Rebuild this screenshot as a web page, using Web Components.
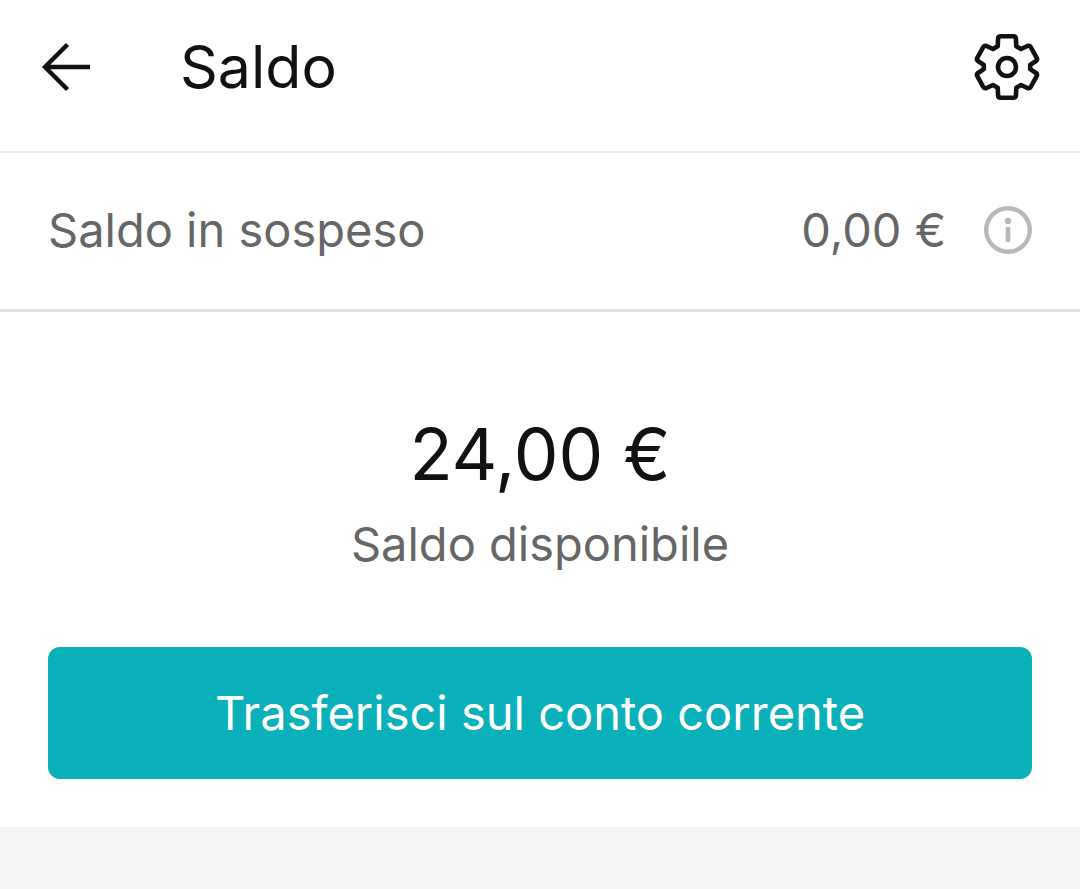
<!DOCTYPE html>
<html lang="it">
<head>
<meta charset="utf-8">
<meta name="viewport" content="width=device-width, initial-scale=1">
<title>Saldo</title>
<style>
  body {
    margin: 0;
    background: #f4f5f7;
    color: #111;
    font-family: Inter, "Liberation Sans", sans-serif;
    --muted: #666;
    --line: #e2e2e2;
    --accent: #0ab1bb;
  }
</style>
</head>
<body>
<balance-page>
  <app-header slot="header">Saldo</app-header>
  <pending-row label="Saldo in sospeso">0,00 €</pending-row>
  <balance-summary amount="24,00 €" label="Saldo disponibile">
    <primary-button>Trasferisci sul conto corrente</primary-button>
  </balance-summary>
</balance-page>

<script>
/** <balance-page> - white sheet holding the header and the balance sections */
class BalancePage extends HTMLElement {
  constructor() {
    super();
    this.attachShadow({ mode: 'open' });
    this.shadowRoot.innerHTML = `
      <style>
        :host {
          display: block;
          background: #fff;
        }
      </style>
      <slot name="header"></slot>
      <main><slot></slot></main>
    `;
  }
}

/** <app-header> - back button, title (slot) and settings button */
class AppHeader extends HTMLElement {
  constructor() {
    super();
    this.attachShadow({ mode: 'open' });
    this.shadowRoot.innerHTML = `
      <style>
        :host {
          display: block;
          border-bottom: 2px solid #ebebeb;
        }

        header {
          display: flex;
          align-items: center;
          padding: 33px 40px 50px;
        }

        h1 {
          flex: 1;
          margin: 0 0 0 88px;
          font-size: 59px;
          line-height: 68px;
          font-weight: 400;
        }

        button {
          display: flex;
          padding: 0;
          border: 0;
          background: none;
          color: inherit;
          cursor: pointer;
        }

        svg {
          display: block;
          fill: none;
          stroke: currentColor;
        }
      </style>
      <header>
        <button type="button" aria-label="Indietro">
          <svg width="52" height="52" viewBox="0 0 52 52" stroke-width="4.4">
            <path d="M50 26H5M27.500 3.500L5 26l22.500 22.500" />
          </svg>
        </button>
        <h1><slot></slot></h1>
        <button type="button" aria-label="Impostazioni">
          <svg width="66" height="66" viewBox="0 0 66 66" stroke-width="4.6" stroke-linejoin="round">
            <path d="M26.5 2.3H39.5Q41.7 2.3 41.9 4.5L42.3 12.3L47 15L53.5 12Q55.5 11.200 56.700 13L62.700 23.800Q63.700 25.800 62 27L56.200 30.800V35.200L62 39Q63.700 40.200 62.700 42.200L56.700 53Q55.500 54.800 53.500 54L47 51L42.300 53.700L41.900 61.500Q41.700 63.700 39.500 63.700H26.500Q24.300 63.700 24.100 61.500L23.700 53.700L19 51L12.500 54Q10.500 54.800 9.300 53L3.300 42.200Q2.300 40.200 4 39L9.800 35.200V30.800L4 27Q2.300 25.800 3.300 23.800L9.300 13Q10.500 11.200 12.500 12L19 15L23.700 12.300L24.100 4.500Q24.300 2.300 26.500 2.300Z" />
            <circle cx="33" cy="33" r="9" />
          </svg>
        </button>
      </header>
    `;
  }
}

/**
 * <pending-row label="..."> - label on the left, amount (slot) and info button on the right
 */
class PendingRow extends HTMLElement {
  constructor() {
    super();
    this.attachShadow({ mode: 'open' });
  }

  connectedCallback() {
    this.shadowRoot.innerHTML = `
      <style>
        :host {
          display: flex;
          align-items: center;
          padding: 47px 48px 49px;
          border-bottom: 3px solid var(--line);
          color: var(--muted);
          font-size: 47px;
          line-height: 60px;
        }

        .label {
          flex: 1;
        }

        button {
          display: flex;
          margin-left: 38px;
          padding: 0;
          border: 0;
          background: none;
          color: #b9b9b9;
          cursor: pointer;
        }
      </style>
      <span class="label">${this.getAttribute('label')}</span>
      <span><slot></slot></span>
      <button type="button" aria-label="Informazioni">
        <svg width="48" height="48" viewBox="0 0 48 48">
          <circle cx="24" cy="24" r="21.8" fill="none" stroke="currentColor" stroke-width="4.4" />
          <circle cx="24" cy="15" r="3.2" fill="currentColor" />
          <path d="M24 21v15" stroke="currentColor" stroke-width="4.6" />
        </svg>
      </button>
    `;
  }
}

/**
 * <balance-summary amount="..." label="..."> - large centred amount, action in the slot
 */
class BalanceSummary extends HTMLElement {
  constructor() {
    super();
    this.attachShadow({ mode: 'open' });
  }

  connectedCallback() {
    this.shadowRoot.innerHTML = `
      <style>
        :host {
          display: block;
          padding: 98px 48px 48px;
          text-align: center;
        }

        p {
          margin: 0;
        }

        .amount {
          font-size: 71px;
          line-height: 88px;
        }

        .label {
          margin: 16px 0 73px;
          color: var(--muted);
          font-size: 47px;
          line-height: 60px;
        }
      </style>
      <p class="amount">${this.getAttribute('amount')}</p>
      <p class="label">${this.getAttribute('label')}</p>
      <slot></slot>
    `;
  }
}

/** <primary-button> - full width filled button */
class PrimaryButton extends HTMLElement {
  constructor() {
    super();
    this.attachShadow({ mode: 'open' });
    this.shadowRoot.innerHTML = `
      <style>
        :host {
          display: block;
        }

        button {
          display: block;
          width: 100%;
          padding: 36px 24px;
          border: 0;
          border-radius: 12px;
          background: var(--accent);
          color: #fff;
          font: inherit;
          font-size: 47px;
          line-height: 60px;
          cursor: pointer;
        }
      </style>
      <button type="button"><slot></slot></button>
    `;
  }
}

customElements.define('balance-page', BalancePage);
customElements.define('app-header', AppHeader);
customElements.define('pending-row', PendingRow);
customElements.define('balance-summary', BalanceSummary);
customElements.define('primary-button', PrimaryButton);
</script>
</body>
</html>
